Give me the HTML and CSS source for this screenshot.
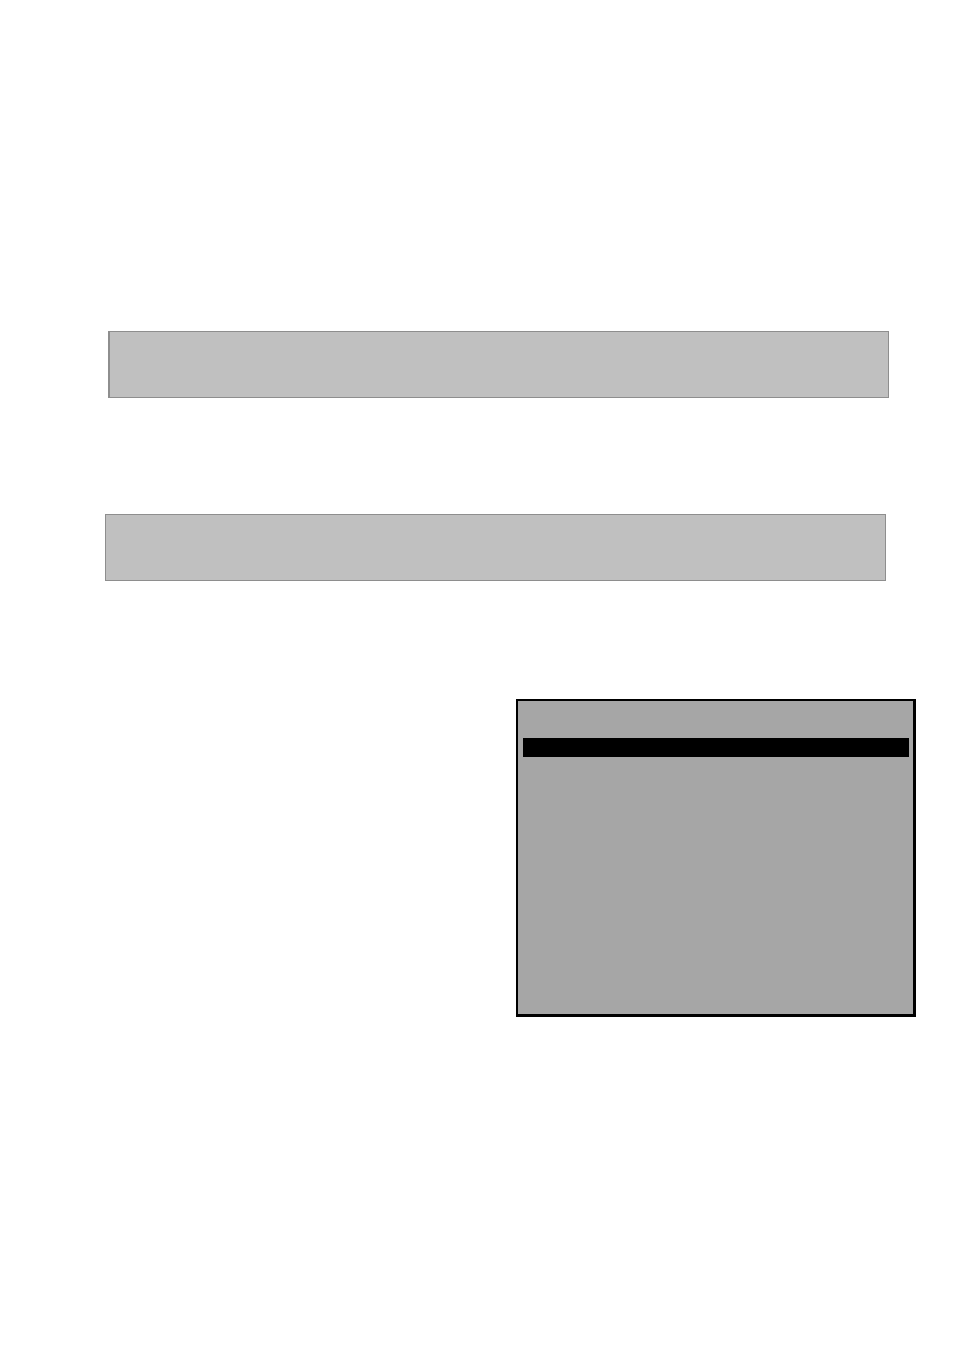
FILE: index.html
```html
<!DOCTYPE html>
<html>
<head>
<meta charset="utf-8">
<link rel="stylesheet" href="styles.css">
</head>
<body>
<div class="page">
  <div class="box box-first"></div>
  <div class="box box-second"></div>
  <div class="panel">
    <div class="panel-bar"></div>
  </div>
</div>
</body>
</html>
```
FILE: styles.css
```css
html, body {
  margin: 0;
  padding: 0;
  background: #ffffff;
  font-family: "Liberation Sans", Arial, sans-serif;
}
.page {
  width: 954px;
  height: 1350px;
  display: flex;
  flex-direction: column;
  align-items: flex-start;
}
.box {
  box-sizing: border-box;
  width: 781px;
  height: 67px;
  background: #c0c0c0;
  border: 1px solid #8e8e8e;
}
.box-first {
  margin-top: 331px;
  margin-left: 108px;
  border-left-width: 2px;
}
.box-second {
  margin-top: 116px;
  margin-left: 105px;
}
.panel {
  box-sizing: border-box;
  margin-top: 118px;
  margin-left: 516px;
  width: 400px;
  height: 318px;
  background: #a6a6a6;
  border-style: solid;
  border-color: #000000;
  border-width: 2px 3px 3px 2px;
  padding: 37px 0 0 5px;
}
.panel-bar {
  width: 386px;
  height: 19px;
  background: #000000;
}
```
